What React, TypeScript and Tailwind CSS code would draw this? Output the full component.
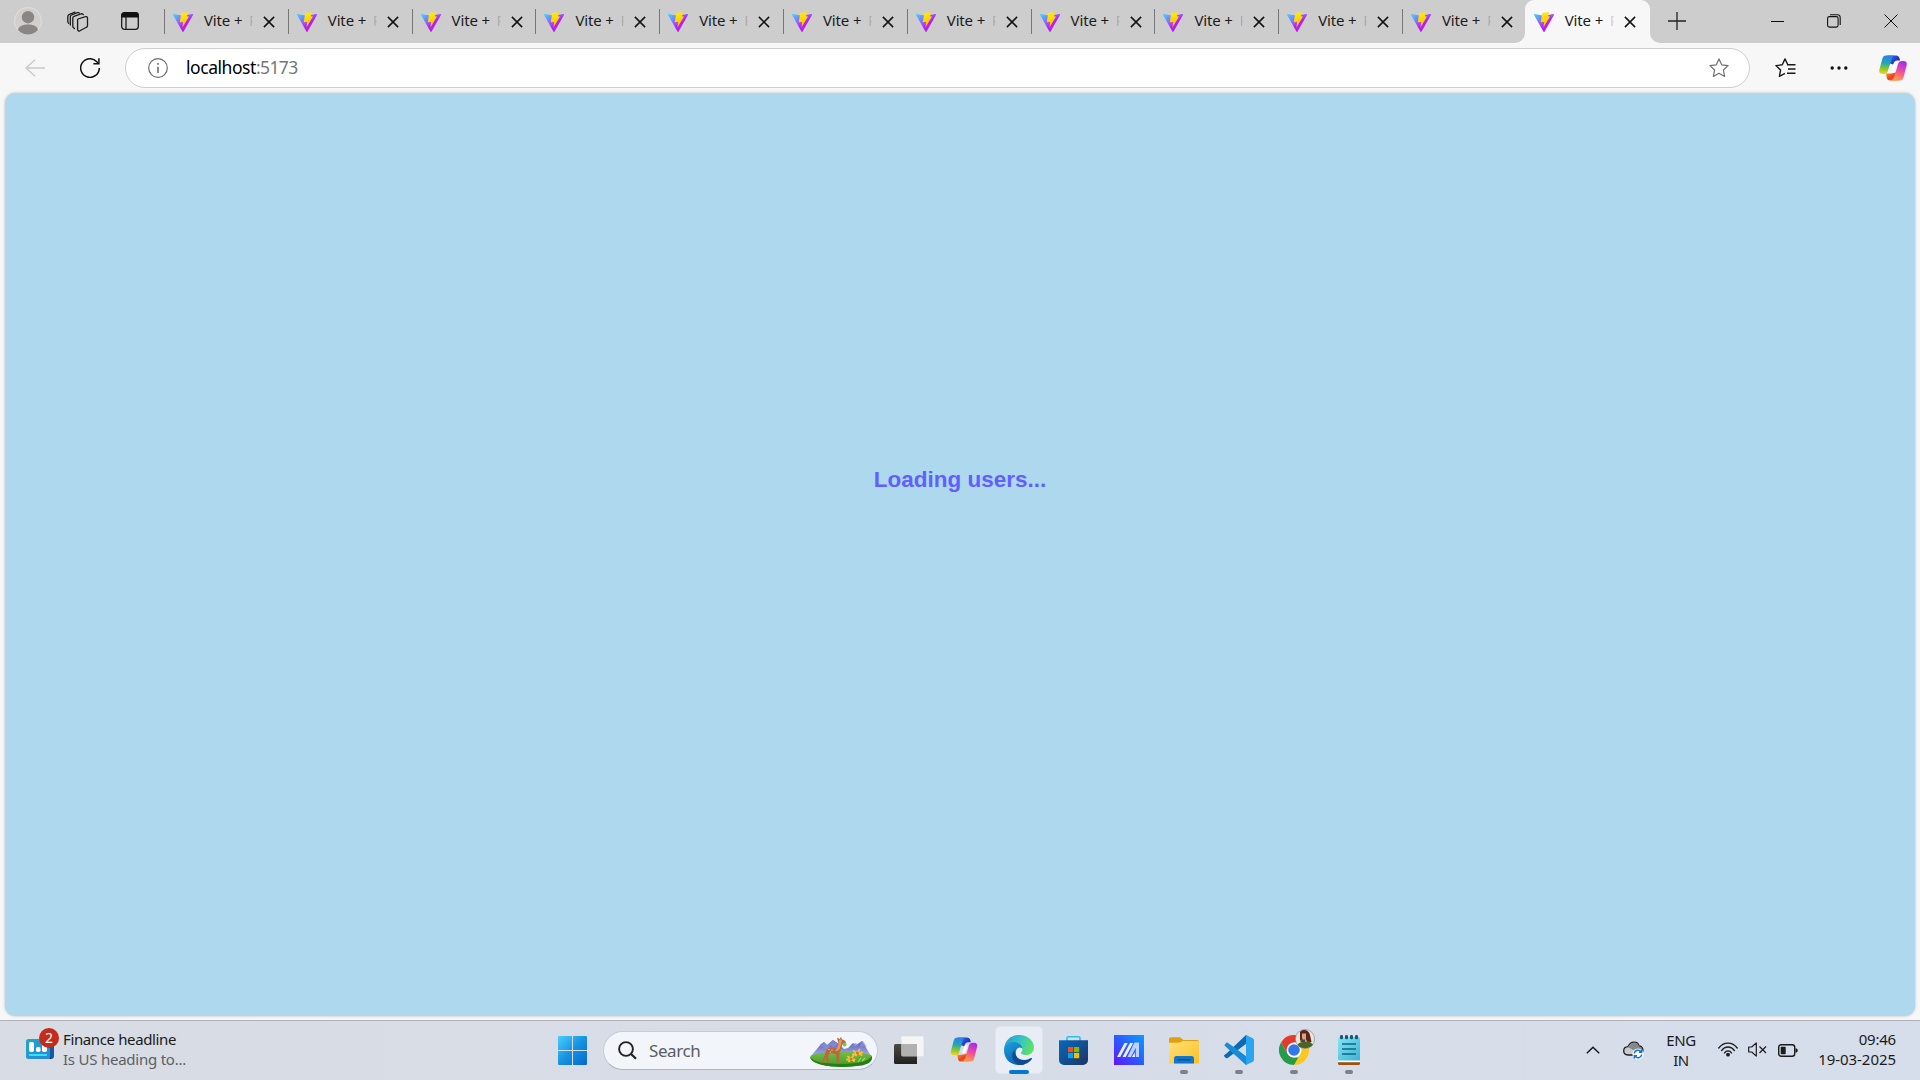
import React from "react";

type P = { className?: string };

function Svg({ box, className, children }: { box: string; className?: string; children: React.ReactNode }) {
  return (
    <svg viewBox={box} className={"block shrink-0 " + (className ?? "")} fill="none">
      {children}
    </svg>
  );
}

function Defs() {
  return (
    <svg className="absolute h-0 w-0" aria-hidden="true">
      <defs>
        <linearGradient id="viteA" x1="0" y1="0.07" x2="0.5" y2="0.6">
          <stop offset="0" stopColor="#41d1ff" />
          <stop offset="0.9" stopColor="#a83cff" />
          <stop offset="1" stopColor="#b81cf8" />
        </linearGradient>
        <linearGradient id="viteB" x1="0.4" y1="0" x2="0.6" y2="1">
          <stop offset="0" stopColor="#ffe81a" />
          <stop offset="0.5" stopColor="#fbd500" />
          <stop offset="1" stopColor="#ffa800" />
        </linearGradient>
        <linearGradient id="copL" x1="0.5" y1="0" x2="0.4" y2="1">
          <stop offset="0" stopColor="#2f7df0" />
          <stop offset="0.4" stopColor="#22a5b5" />
          <stop offset="0.7" stopColor="#7fc733" />
          <stop offset="1" stopColor="#f7d21c" />
        </linearGradient>
        <linearGradient id="copR" x1="0.6" y1="0" x2="0.3" y2="1">
          <stop offset="0" stopColor="#a42df0" />
          <stop offset="0.5" stopColor="#f0509a" />
          <stop offset="1" stopColor="#ffa245" />
        </linearGradient>
        <linearGradient id="copT" x1="0" y1="0" x2="1" y2="0.6">
          <stop offset="0" stopColor="#2b7cf0" />
          <stop offset="1" stopColor="#2320bb" />
        </linearGradient>
        <linearGradient id="copB" x1="0" y1="0" x2="1" y2="1">
          <stop offset="0" stopColor="#f7a020" />
          <stop offset="0.5" stopColor="#e8441c" />
          <stop offset="1" stopColor="#f47b45" />
        </linearGradient>
        <linearGradient id="win" x1="0" y1="0" x2="1" y2="1">
          <stop offset="0" stopColor="#48cfff" />
          <stop offset="0.5" stopColor="#1593e0" />
          <stop offset="1" stopColor="#0468cf" />
        </linearGradient>
        <linearGradient id="edgeA" x1="0" y1="0.3" x2="1" y2="0.6">
          <stop offset="0" stopColor="#239dd5" />
          <stop offset="0.5" stopColor="#35c4c5" />
          <stop offset="1" stopColor="#62e45c" />
        </linearGradient>
        <linearGradient id="edgeB" x1="0" y1="0" x2="0.5" y2="1">
          <stop offset="0" stopColor="#1fa0de" />
          <stop offset="1" stopColor="#0863b5" />
        </linearGradient>
        <linearGradient id="store" x1="0" y1="0" x2="1" y2="1">
          <stop offset="0" stopColor="#0669bd" />
          <stop offset="1" stopColor="#1e3563" />
        </linearGradient>
        <linearGradient id="asus" x1="1" y1="0" x2="0" y2="1">
          <stop offset="0" stopColor="#0a9cff" />
          <stop offset="0.5" stopColor="#2a5cff" />
          <stop offset="1" stopColor="#6414ff" />
        </linearGradient>
        <linearGradient id="folder" x1="0" y1="0" x2="1" y2="1">
          <stop offset="0" stopColor="#ffe17c" />
          <stop offset="1" stopColor="#fdc120" />
        </linearGradient>
        <linearGradient id="note" x1="0" y1="0" x2="1" y2="1">
          <stop offset="0" stopColor="#85e5f3" />
          <stop offset="1" stopColor="#3cb1d3" />
        </linearGradient>
        <linearGradient id="hill" x1="0" y1="0" x2="0" y2="1">
          <stop offset="0" stopColor="#5158b0" />
          <stop offset="1" stopColor="#a3aee8" />
        </linearGradient>
        <linearGradient id="grass" x1="0" y1="0" x2="0" y2="1">
          <stop offset="0" stopColor="#79ba48" />
          <stop offset="0.7" stopColor="#51a62e" />
          <stop offset="1" stopColor="#23801a" />
        </linearGradient>
        <linearGradient id="dark" x1="0" y1="0" x2="0" y2="1">
          <stop offset="0" stopColor="#4c4b4a" />
          <stop offset="1" stopColor="#21201f" />
        </linearGradient>
        <linearGradient id="widget" x1="0" y1="0" x2="1" y2="1">
          <stop offset="0" stopColor="#1fa9c4" />
          <stop offset="1" stopColor="#2b86db" />
        </linearGradient>
      </defs>
    </svg>
  );
}

function ViteIcon({ className }: P) {
  return (
    <Svg box="0 0 256 256" className={className}>
      <path fill="url(#viteA)" d="M8 27 128 48 248 27c6-1 10 5 7 10L134 253c-3 4-9 4-12 0L1 37c-3-5 1-11 7-10Z" />
      <path fill="url(#viteB)" d="m106 14 86-14-14 54 26 4-84 144 8-74-42 4Z" />
    </Svg>
  );
}

function CloseIcon() {
  return (
    <Svg box="0 0 12 12" className="h-3 w-3">
      <path d="M.9.9 11.1 11.1M11.1.9.9 11.1" stroke="#111" strokeWidth="1.5" />
    </Svg>
  );
}

function CopilotIcon({ className }: P) {
  return (
    <Svg box="0 0 28 26" className={className}>
      <path fill="url(#copT)" d="M8 .5h9c2 0 3 1 3.600 3L21 5.500h-2.500c-2.500 0-3.500 1.500-4.200 4L9 8Z" />
      <path fill="url(#copB)" d="M7 18.500h5l5-1 2.500 8H11c-2 0-2.800-1-3.300-3Z" />
      <path fill="url(#copL)" d="M7 .5h8.500c-1.700.7-2.300 2-2.900 4L8.800 16c-.6 2-1.600 3-3.800 3H3.500C.8 19-.3 17 .4 14.500l3-11C4 1.500 5.200.5 7 .5Z" />
      <path fill="url(#copR)" d="M21 25.500h-8.500c1.700-.7 2.300-2 2.900-4L19 9c.6-2 1.800-3 4-3h1.500c2.700 0 3.800 2 3.100 4.500l-3 11.500c-.6 2.200-1.800 3.500-3.600 3.500Z" />
      <path fill="#fafbff" d="M15 8.500h3l-3 8.500h-3.300Z" />
    </Svg>
  );
}

function Tab({ active }: { active?: boolean }) {
  return (
    <div
      className={
        active
          ? "relative -ml-px flex h-[43px] w-[125px] shrink-0 rounded-t-[9px] bg-[#f7f7f7]"
          : "flex h-[43px] w-[123.8px] shrink-0"
      }
    >
      {active ? (
        <>
          <Svg box="0 0 10 10" className="absolute bottom-0 -left-[10px] h-[10px] w-[10px]">
            <path d="M10 0v10H0A10 10 0 0 0 10 0Z" fill="#f7f7f7" />
          </Svg>
          <Svg box="0 0 10 10" className="absolute -right-[10px] bottom-0 h-[10px] w-[10px]">
            <path d="M0 0v10h10A10 10 0 0 1 0 0Z" fill="#f7f7f7" />
          </Svg>
        </>
      ) : null}
      <div className={active ? "w-px" : "mt-[9px] h-[25px] w-px bg-[#777]"} />
      <ViteIcon className="mt-3 ml-2 h-5 w-5" />
      <div className="ml-[11px] flex w-[59px] text-[15px] leading-[41px] whitespace-pre text-[#1b1b1b]">
        <span className="w-[45px] tracking-[-0.15px]">Vite + </span>
        <span
          className={
            active
              ? "bg-linear-to-r from-[#cfcfcf] from-[3px] to-transparent to-[4px] bg-clip-text text-transparent"
              : "bg-linear-to-r from-[#adadad] from-[3px] to-transparent to-[4px] bg-clip-text text-transparent"
          }
        >
          R
        </span>
      </div>
      <div className="mt-4">
        <CloseIcon />
      </div>
    </div>
  );
}

function TabBar() {
  return (
    <div className="flex h-[43px] bg-[#cdcdcd]">
      <Svg box="0 0 28 28" className="mt-[7px] ml-[14px] h-7 w-7">
        <circle cx="14" cy="14" r="13.300" fill="#d1cfcd" stroke="#dedcd8" strokeWidth="1.200" />
        <circle cx="14" cy="10.200" r="6.200" fill="#8a8684" />
        <path d="M4 23c1-4 5-5.400 10-5.400S23 19 24 23a13.300 13.300 0 0 1-20 0Z" fill="#8a8684" />
      </Svg>
      <Svg box="0 0 22 22" className="mt-[11px] ml-[25px] h-[22px] w-[22px]">
        <g stroke="#1c1c1c" strokeWidth="1.300" strokeLinejoin="round" strokeLinecap="round">
          <path d="m11 8 7.500-2.300c1.200-.4 2 .2 2 1.300v7.600c0 .8-.4 1.400-1.100 1.700l-6.500 3.500c-1 .5-2.300.2-2.300-1.200V9.700c0-.9-.3-1.400.4-1.700Z" />
          <path d="m7.500 17.500-1-.8c-.5-.3-.7-.8-.7-1.400V7c0-.8.400-1.400 1.200-1.700L14 2.900c1-.4 2 0 2.300.8" />
          <path d="M3.300 14V5.700c0-.8.4-1.400 1.200-1.700L10.500 1.700c.8-.3 1.500 0 1.800.3" />
          <path d="m1.600 12.300c-.5-.5-.8-1-.8-1.700V5.500C.8 4.500 1.200 3.900 2 3.600L8 1.200" />
        </g>
      </Svg>
      <Svg box="0 0 18 18" className="mt-3 ml-[32px] h-[18px] w-[18px]">
        <rect x=".7" y=".7" width="16.600" height="16.600" rx="2.800" stroke="#1b1b1b" strokeWidth="1.300" />
        <path d="M.3 5.500V3.200A3 3 0 0 1 3.300.2h11.400a3 3 0 0 1 3 3v2.300Z" fill="#111" />
        <path d="M5 5v12" stroke="#1b1b1b" strokeWidth="1.300" />
      </Svg>
      <div className="ml-[25px] flex">
        {Array.from({ length: 11 }, (_, i) => (
          <Tab key={i} />
        ))}
        <Tab active />
      </div>
      <Svg box="0 0 18 18" className="mt-3 ml-[18px] h-[18px] w-[18px]">
        <path d="M9 0v18M0 9h18" stroke="#222" strokeWidth="1.300" />
      </Svg>
      <div className="flex flex-1 justify-end gap-[43px] pr-[22px]">
        <Svg box="0 0 13 13" className="mt-[15px] h-[13px] w-[13px]">
          <path d="M0 6.500h13" stroke="#111" strokeWidth="1" />
        </Svg>
        <Svg box="0 0 14 14" className="mt-[14px] h-[14px] w-[14px]">
          <rect x=".6" y="2.600" width="10.500" height="10.500" rx="1.800" stroke="#111" strokeWidth="1.100" />
          <path d="M3 .7h7.500a2.700 2.700 0 0 1 2.700 2.700V11" stroke="#111" strokeWidth="1.100" />
        </Svg>
        <Svg box="0 0 14 14" className="mt-[14px] h-[14px] w-[14px]">
          <path d="m.5.5 13 13m0-13-13 13" stroke="#111" strokeWidth="1" />
        </Svg>
      </div>
    </div>
  );
}

function Toolbar() {
  return (
    <div className="flex h-[50px] items-start">
      <Svg box="0 0 20 18" className="mt-4 ml-[25px] h-[18px] w-5">
        <path d="M10 .7 1 9l9 8.300M1 9h19" stroke="#c9c9c9" strokeWidth="1.400" />
      </Svg>
      <Svg box="0 0 20 20" className="mt-[15px] ml-[35px] h-5 w-5">
        <path d="M19.300 10A9.300 9.300 0 1 1 16.800 3.700L18.500 5.500" stroke="#111" strokeWidth="1.500" />
        <path d="M18.900.3v5.500h-5.500" stroke="#111" strokeWidth="1.500" />
      </Svg>
      <div className="mt-[5px] ml-[25px] flex h-10 w-[1625px] items-center rounded-full border border-[#cecece] bg-white pr-5 pl-[22px]">
        <Svg box="0 0 20 20" className="h-5 w-5">
          <circle cx="10" cy="10" r="9.300" stroke="#6d6d6d" strokeWidth="1.200" />
          <path d="M10 8.700V15M10 5v1.800" stroke="#6d6d6d" strokeWidth="1.600" />
        </Svg>
        <div className="ml-[18px] flex-1 text-[17.500px] leading-none tracking-[-0.59px] text-[#767676]">
          <span className="tracking-[-0.45px] text-black">localhost</span>:5173
        </div>
        <Svg box="0 0 20 20" className="h-5 w-5">
          <path d="m10 .9 2.700 5.900 6.400.8-4.700 4.400 1.200 6.400L10 15.300l-5.600 3.100L5.600 12 .9 7.600l6.400-.8Z" stroke="#707070" strokeWidth="1.200" strokeLinejoin="round" />
        </Svg>
      </div>
      <Svg box="0 0 21 20" className="mt-[15px] ml-[25px] h-5 w-[21px]">
        <path d="m12.800 6.800-2.800-5.900-2.700 5.900-6.400.8L5.600 12l-1.200 6.400 5.600-3.100M12 6.800h8.500M13 11h7.500M12 15.200h8.500" stroke="#1b1b1b" strokeWidth="1.400" strokeLinejoin="round" />
      </Svg>
      <Svg box="0 0 18 4" className="mt-[23px] ml-[34px] h-1 w-[18px]">
        <g fill="#111">
          <circle cx="2.200" cy="2" r="1.700" />
          <circle cx="9" cy="2" r="1.700" />
          <circle cx="15.800" cy="2" r="1.700" />
        </g>
      </Svg>
      <CopilotIcon className="mt-3 ml-[31px] h-[26px] w-7" />
    </div>
  );
}

function TaskApp({ children, dot }: { children: React.ReactNode; dot?: boolean }) {
  return (
    <div className="relative flex h-12 w-[55px] items-center justify-center">
      {children}
      {dot ? <div className="absolute bottom-0 left-[23.500px] h-1 w-2 rounded-full bg-[#7d8187]" /> : null}
    </div>
  );
}

function Widgets() {
  return (
    <div className="flex w-[558px] pt-[7px] pl-[26px]">
      <div className="relative h-[32px] w-[33px]">
        <Svg box="0 0 28 20" className="mt-[11px] h-5 w-7">
          <path d="M20 0h5a3 3 0 0 1 3 3v14a3 3 0 0 1-3 3h-5Z" fill="#0b5cab" />
          <path d="M24 2h1v18h-1Z" fill="#06264c" />
          <rect width="24.500" height="20" rx="2.500" fill="url(#widget)" />
          <rect x="3" y="3" width="5" height="10" rx="1.800" fill="#fff" />
          <rect x="10" y="8" width="4.500" height="5" rx="1.800" fill="#fff" />
          <rect x="16" y="5" width="5" height="8" rx="1.800" fill="#fff" />
          <path d="M3 16h18" stroke="#35e0f5" strokeWidth="2" />
        </Svg>
        <div className="absolute top-0 left-[13px] flex h-5 w-5 items-center justify-center rounded-full bg-[#c42b1c] text-[14px] leading-none text-white">2</div>
      </div>
      <div className="ml-[4px] text-[15px] leading-5">
        <div className="mt-px tracking-[-0.37px] text-[#1a1a1a]">Finance headline</div>
        <div className="tracking-[-0.23px] text-[#5c5f64]">Is US heading to...</div>
      </div>
    </div>
  );
}

function SearchArt() {
  return (
    <Svg box="0 0 62 32" className="h-8 w-[62px]">
      <path d="M1 21 11 9l3-2 3 3 6-5 6 4 5 5 4-1 5-5 3 2 6-4 9 15Z" fill="url(#hill)" />
      <path d="m10 10 4-3 3 3 6-5 5 4-4 3-4-2-3 4-4-2ZM43 9l3-1 2 2-4 2ZM50 8l3-2 4 6-4-1-2 3Z" fill="#8c93d8" opacity=".7" />
      <path d="M0 22c2-3 6-3 11-4 13-2 38-2 50 2 3 3-2 7-7 9-15 4-35 4-46-1-3-1-6-2-8-6Z" fill="url(#grass)" />
      <path d="M0 22c4 5 14 7 31 7 15 0 27-2 31-8 1 5-3 8-10 9.500-14 2-29 2-40-.5C5 28 1 26 0 22Z" fill="#247f18" />
      <path d="M16 15c3-3 7-2 10-2 2 0 3-2 2.500-4L27 2.500 29.500 4l1.500-2 1 2.500c2 0 4 2 4 3.500s-2 1.500-4 1.500c0 3-1 6-2.500 7.500l-.5 11.500h-2L26 19l-6-1-2 3 1 7h-2l-1.500-6-2 6h-2l3-7Z" fill="#b9683b" />
      <path d="M29 5c1-1 2.500-1 3 1l-2 7c-1 3-3 3-5 3 3-3 3-6 4-11Z" fill="#d99b68" />
      <g fill="#fff0d5">
        <circle cx="19" cy="14.500" r=".6" />
        <circle cx="22" cy="15" r=".6" />
        <circle cx="20.500" cy="17" r=".5" />
      </g>
      <circle cx="34.500" cy="9.500" r="2" fill="#86bf4b" />
      <g stroke="#f8c13a" strokeWidth="1.900" strokeLinecap="round">
        <path d="m43.500 16 8 4M49.500 14.500l-3.500 6M43 19.500l9-2M38 21.500l6 4.500M43.500 20.500l-4.500 6M37 24.500h7.500" />
      </g>
      <circle cx="47.500" cy="18" r="1.600" fill="#df7610" />
      <circle cx="41" cy="24" r="1.500" fill="#df7610" />
      <path d="m48 27 3-4M52 26l3-3" stroke="#a7d86b" strokeWidth="1.100" />
    </Svg>
  );
}

function TaskApps() {
  return (
    <div className="ml-[3px] flex pt-[5px]">
      <TaskApp>
        <Svg box="0 0 30 28" className="h-7 w-[30px]">
          <path d="M0 9.500A1.500 1.500 0 0 1 1.500 8H23v20H1.500A1.500 1.500 0 0 1 0 26.500Z" fill="url(#dark)" />
          <rect x="7.500" y=".2" width="22" height="20" rx="1.200" fill="#f5f5f5" />
          <path d="M7.500 8H23v12.200H8.500a1 1 0 0 1-1-1Z" fill="#b1b1b1" />
        </Svg>
      </TaskApp>
      <TaskApp>
        <CopilotIcon className="mb-px h-[25px] w-7" />
      </TaskApp>
      <TaskApp>
        <div className="relative flex h-12 w-12 items-center justify-center rounded-[5px] border border-[#e0e4eb] bg-[#e9edf5]">
          <Svg box="0 0 30 30" className="h-[30px] w-[30px]">
            <path d="M0 14C1 5 7 0 15 0c9 0 15 6 15 12.500 0 5-4 7.500-8 7.500-3.500 0-5-1.200-5-2 0-.6 1.400-1.300 1.400-3.500 0-3-4-6-9-6C5 8.500 1.500 10.500 0 14Z" fill="url(#edgeA)" />
            <path d="M0 15C0 10 5 7 9.500 7c5.300 0 9 3.500 9 7.300 0-2-5-3.300-6.500 1.700-1 6 3 11 9 13-2 .9-4 1-6 1C6 30 0 23.500 0 15Z" fill="url(#edgeB)" />
            <path d="M10.500 16.500c0 4.500 4.500 8.500 10 8.500 3 0 5.300-1.400 6.500-2 .8-.4 1.300.3.900.9C25.500 27.500 20.500 30 15.500 30 9.500 28 7.500 22.500 8.500 18.500c.6-2.200 2.200-4 4.500-5.200-1.700 1-2.500 2-2.500 3.200Z" fill="#114a92" />
          </Svg>
          <div className="absolute -bottom-px left-[13px] h-1 w-5 rounded-full bg-[#0078d4]" />
        </div>
      </TaskApp>
      <TaskApp>
        <Svg box="0 0 29 29" className="h-[29px] w-[29px]">
          <path d="M8 5V2a1.200 1.200 0 0 1 1.200-1.200h10.600A1.200 1.200 0 0 1 21 2v3" stroke="#29c0f1" strokeWidth="1.600" />
          <path d="M0 4.200h29V24a5 5 0 0 1-5 5H5a5 5 0 0 1-5-5Z" fill="url(#store)" />
          <path d="M9 11h5.200v5.200H9Z" fill="#f25022" />
          <path d="M15 11h5.200v5.200H15Z" fill="#7fba00" />
          <path d="M9 17h5.200v5.200H9Z" fill="#00a4ef" />
          <path d="M15 17h5.200v5.200H15Z" fill="#ffb900" />
        </Svg>
      </TaskApp>
      <TaskApp>
        <Svg box="0 0 30 30" className="h-[30px] w-[30px]">
          <path d="M0 0h30v30H0Z" fill="url(#asus)" />
          <path d="M3 22 10.500 8h3.200L6.200 22ZM8.500 22 16 8h3.200L11.700 22Z" fill="#e9efff" />
          <path d="M20.500 7.500H25V22h-3.200v-9.500L17 22h-3.500Z" fill="#bcd2ff" />
          <path d="m18 22 2.800-4.500V22Z" fill="#fff" />
        </Svg>
      </TaskApp>
      <TaskApp dot>
        <Svg box="0 0 30 27" className="h-[27px] w-[30px]">
          <path d="M0 2A1.800 1.800 0 0 1 1.800.3h8c1.200 0 2 .4 2.800 1.200L14.500 3H28a2 2 0 0 1 2 2v5H0Z" fill="#e0a010" />
          <path d="M0 5.700h9.500c1 0 2-.3 2.800-.9L13.500 4H29a1 1 0 0 1 1 1v20.500a1 1 0 0 1-1 1H1a1 1 0 0 1-1-1Z" fill="url(#folder)" />
          <path d="M5 26.500v-5A2.500 2.500 0 0 1 7.500 19h15a2.500 2.500 0 0 1 2.500 2.500v5Z" fill="#1175c9" />
          <path d="M8.500 22.700h13" stroke="#0a4c8a" strokeWidth="1.400" />
        </Svg>
      </TaskApp>
      <TaskApp dot>
        <Svg box="0 0 30 30" className="h-[30px] w-[30px]">
          <path d="M22 0 28.300 3c1 .5 1.700 1.500 1.700 2.600v18.800c0 1.100-.7 2.100-1.700 2.600L22 30Z" fill="#2aa5ee" />
          <path d="M22 0 3 18l-2.500 2c-.6.400-.6 1.200 0 1.700L2 23c.5.400 1.200.4 1.700.1L22.500 9Z" fill="#0a6ab2" />
          <path d="M22 30 1 11c-.6-.5-.6-1.300 0-1.800L2.300 8c.5-.5 1.200-.5 1.700-.1L22.500 21Z" fill="#168cd6" />
          <path d="M22.500 8.500v13L14 15Z" fill="#d5dce9" />
          <path d="M22.500 0v30" stroke="#2aa5ee" strokeWidth="1" />
        </Svg>
      </TaskApp>
      <TaskApp dot>
        <Svg box="0 0 30 30" className="h-[30px] w-[30px]">
          <path d="M2 7.500A15 15 0 0 1 28 7.500H15l-6.500 11.300Z" fill="#e33b2e" />
          <path d="M2 7.500 8.500 18.800A7.500 7.500 0 0 0 15 22.500h6.500L15 30A15 15 0 0 1 2 7.500Z" fill="#269b48" />
          <path d="M28 7.500A15 15 0 0 1 15 30l6.500-11.200A7.500 7.500 0 0 0 15 7.500Z" fill="#fcc820" />
          <circle cx="15" cy="15" r="7.400" fill="#fff" />
          <circle cx="15" cy="15" r="5.800" fill="#3277ea" />
        </Svg>
        <Svg box="0 0 20 20" className="absolute top-[3px] left-[29px] h-5 w-5">
          <circle cx="10" cy="10" r="9.600" fill="#e7e6dc" stroke="#8f8f89" strokeWidth=".7" />
          <path d="M5 3c3-3.500 9-2 10 3l1.500 7-5 1-4-2L5 11Z" fill="#5b241d" />
          <path d="M7 4.500h4v6l2 3H8l-1-5Z" fill="#daa486" />
          <path d="M2.500 16c2-3 4-3 7-3l4-1 4.500 3.500c-3 5-12 5-15.500.5Z" fill="#4c6429" />
          <path d="M5.500 10.500h4.500v2.500H5.500Z" fill="#55463d" />
        </Svg>
      </TaskApp>
      <TaskApp dot>
        <Svg box="0 0 22 30" className="h-[30px] w-[22px]">
          <path d="M0 27h22v1.500A1.500 1.500 0 0 1 20.500 30h-19A1.500 1.500 0 0 1 0 28.500Z" fill="#a3500f" />
          <path d="M0 25h22v2.200H0Z" fill="#fff" />
          <path d="M0 4a2 2 0 0 1 2-2h18a2 2 0 0 1 2 2v21.500H0Z" fill="url(#note)" />
          <path d="M4 9h14M4 14h14M4 19h14" stroke="#0c6689" strokeWidth="1.700" />
          <g fill="#0e5773">
            <rect x="2" width="3" height="4.300" rx="1.400" />
            <rect x="7" width="3" height="4.300" rx="1.400" />
            <rect x="12" width="3" height="4.300" rx="1.400" />
            <rect x="17" width="3" height="4.300" rx="1.400" />
          </g>
        </Svg>
      </TaskApp>
    </div>
  );
}

function Tray() {
  return (
    <div className="flex flex-1 justify-end pr-6 text-[#1b1b1b]">
      <Svg box="0 0 14 8" className="mt-[25px] h-2 w-[14px]">
        <path d="m.8 7.300 6.200-6 6.200 6" stroke="#1b1b1b" strokeWidth="1.500" />
      </Svg>
      <Svg box="0 0 21 19" className="mt-[20px] ml-[23px] h-[19px] w-[21px]">
        <path d="M5 14C-1 14-.5 6 5 5.700 7.500-.5 15-.3 16 5c4 .3 5 5 2.500 7.500L14 14Z" fill="#c9cbce" stroke="#1b1b1b" strokeWidth="1.300" />
        <path d="M5 6C8 0 15 0 16 5.300c2 .2 3.500 2 3.500 4L10 9Z" fill="#858789" />
        <circle cx="15" cy="13" r="5.600" fill="#fff" />
        <path d="M11.300 12.500a3.800 3.800 0 0 1 7-1.500M18.700 13.500a3.800 3.800 0 0 1-7 1.500M18.700 8.500V11.300H16M11.300 17.500v-2.800H14" stroke="#0b74cf" strokeWidth="1.400" />
      </Svg>
      <div className="mt-[9px] ml-[16px] w-[42px] text-center text-[15px] leading-5 tracking-[-0.4px]">
        <div>ENG</div>
        <div>IN</div>
      </div>
      <Svg box="0 0 20 15" className="mt-[21px] ml-[16px] h-[15px] w-5">
        <g stroke="#1b1b1b" strokeWidth="1.400" strokeLinecap="round">
          <path d="M.8 6C5.500-.5 14.500-.5 19.200 6M3.700 8.500c3.300-4.700 9.300-4.700 12.600 0M6.500 11c1.700-2.800 5.300-2.800 7 0" />
        </g>
        <circle cx="10" cy="12.700" r="1.900" fill="#1b1b1b" />
      </Svg>
      <Svg box="0 0 19 15" className="mt-[21px] ml-[10px] h-[15px] w-[19px]">
        <path d="M.7 5h3L8.300.9v13.200L3.700 10h-3Z" stroke="#1b1b1b" strokeWidth="1.200" strokeLinejoin="round" />
        <path d="m11.500 4.500 6.500 6.500m0-6.500L11.500 11" stroke="#1b1b1b" strokeWidth="1.200" />
      </Svg>
      <Svg box="0 0 20 13" className="mt-[23px] ml-[11px] h-[13px] w-5">
        <rect x=".7" y=".7" width="16" height="11.600" rx="2.500" stroke="#1b1b1b" strokeWidth="1.400" />
        <rect x="2.700" y="2.700" width="5" height="7.600" rx=".8" fill="#1b1b1b" />
        <path d="M17.500 4.300c3 0 3 4.400 0 4.400Z" fill="#1b1b1b" />
      </Svg>
      <div className="mt-[8px] w-[98px] text-right text-[15px] leading-5 whitespace-nowrap">
        <div className="tracking-[-0.2px]">09:46</div>
        <div className="tracking-[-0.05px]">19-03-2025</div>
      </div>
    </div>
  );
}

export default function App() {
  return (
    <div className="flex h-[1080px] w-[1920px] flex-col overflow-hidden bg-[#f7f7f7] font-['Noto_Sans',sans-serif]">
      <Defs />
      <TabBar />
      <Toolbar />
      <main className="mx-[5px] flex h-[923px] shrink-0 justify-center rounded-[10px] bg-[#aed8ee] pt-[371px] shadow-[0_0_3px_rgba(0,0,0,0.25)]">
        <p className="font-['Liberation_Sans',sans-serif] text-[22.5px] leading-8 font-bold text-[#615fff]">Loading users...</p>
      </main>
      <footer className="mt-1 flex h-[60px] shrink-0 border-t border-[#acb0b8] bg-[#d7dde9] bg-linear-to-r from-[#d8dce4] to-[#d6deeb]">
        <Widgets />
        <Svg box="0 0 29 29" className="mt-[15px] h-[29px] w-[29px]">
          <path d="M1 0h13v14H0V1a1 1 0 0 1 1-1ZM15 0h13a1 1 0 0 1 1 1v13H15ZM0 15h14v14H1a1 1 0 0 1-1-1ZM15 15h14v13a1 1 0 0 1-1 1H15Z" fill="url(#win)" />
        </Svg>
        <div className="mt-[10px] ml-[16px] flex h-[39px] w-[275px] items-center rounded-full border border-[#c5cbd8] border-b-[#aeb5c3] bg-[#f2f5fa] pr-[5px] pl-[14px]">
          <Svg box="0 0 19 19" className="h-[19px] w-[19px]">
            <circle cx="8" cy="8" r="6.900" stroke="#222" strokeWidth="1.900" />
            <path d="m12.800 12.800 5.200 5" stroke="#222" strokeWidth="2.200" />
          </Svg>
          <span className="ml-3 flex-1 text-[17px] leading-none tracking-[-0.4px] text-[#5c5d60]">Search</span>
          <SearchArt />
        </div>
        <TaskApps />
        <Tray />
      </footer>
    </div>
  );
}
